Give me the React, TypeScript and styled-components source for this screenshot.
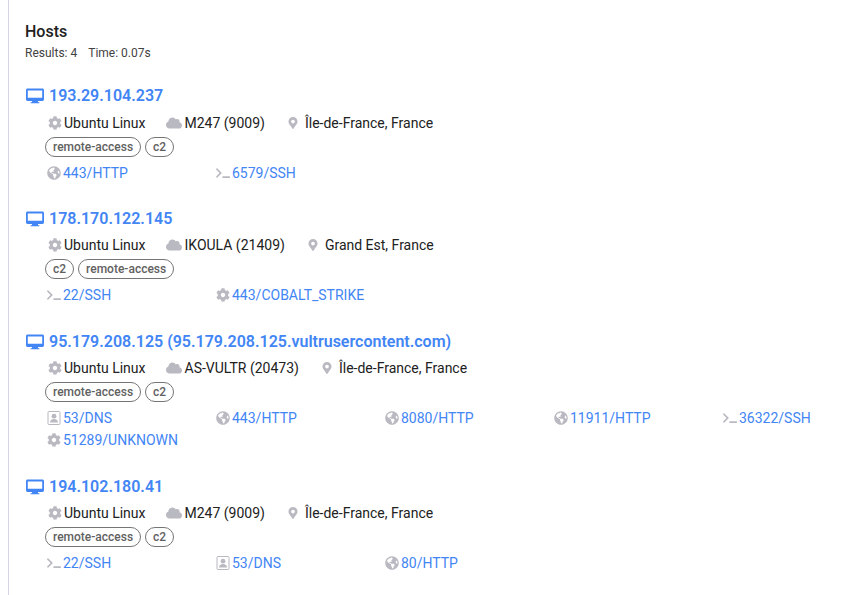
import { ReactNode } from "react";
import styled, { createGlobalStyle } from "styled-components";
import {
  FaCloud,
  FaCog,
  FaGlobeAmericas,
  FaMapMarkerAlt,
  FaTerminal,
} from "react-icons/fa";

const GlobalStyle = createGlobalStyle`
  html, body {
    margin: 0;
    padding: 0;
    background: #fff;
    overflow: hidden;
  }
  body {
    font-family: Roboto, "Liberation Sans", sans-serif;
  }
`;

const Page = styled.div`
  margin-left: 8px;
  width: 841px;
  height: 595px;
  box-sizing: border-box;
  border-left: 1px solid #d4d4e6;
  padding: 22px 0 0 16px;
`;

const Title = styled.h1`
  margin: 0;
  font-size: 16px;
  line-height: 19px;
  font-weight: 500;
  color: #212121;
`;

const Stats = styled.div`
  margin-top: 5px;
  display: flex;
  gap: 11px;
  font-size: 12px;
  line-height: 14px;
  color: #424242;
`;

const HostList = styled.div`
  margin-top: 25.2px;
  display: flex;
  flex-direction: column;
`;

const Host = styled.section`
  height: 122.8px;
  &:nth-child(3) {
    height: 145px;
  }
`;

const HostName = styled.a`
  display: flex;
  align-items: center;
  gap: 5px;
  margin-left: 1px;
  font-size: 16px;
  line-height: 22px;
  font-weight: 600;
  color: #4285f4;
`;

const Meta = styled.div`
  display: flex;
  align-items: center;
  margin: 6.4px 0 0 23px;
  height: 18px;
  font-size: 14px;
  color: #212121;
`;

const MetaItem = styled.span<{ $gap: number }>`
  display: flex;
  align-items: center;
  gap: 2px;
  margin-right: ${(p) => p.$gap}px;
  svg {
    color: #b9b9c1;
    font-size: 14px;
    flex: none;
  }
`;

const OrgItem = styled(MetaItem)`
  gap: 3px;
  svg {
    font-size: 16px;
  }
`;

const Place = styled(MetaItem)`
  gap: 6px;
  svg {
    font-size: 12px;
  }
`;

const Tags = styled.div`
  display: flex;
  gap: 4px;
  margin: 5px 0 0 20px;
`;

const Tag = styled.span`
  box-sizing: border-box;
  height: 20px;
  padding: 0 7px;
  border: 1px solid #757575;
  border-radius: 10px;
  font-size: 12px;
  line-height: 18px;
  font-weight: 500;
  color: #616161;
`;

const Ports = styled.div`
  display: grid;
  grid-template-columns: repeat(4, 169px) 126px;
  margin: 5px 0 0 22px;
`;

const Port = styled.a`
  display: flex;
  align-items: center;
  gap: 2px;
  height: 22px;
  font-size: 14px;
  color: #4285f4;
  svg {
    color: #b9b9c1;
    font-size: 14px;
    flex: none;
  }
`;

const DesktopIcon = () => (
  <svg width="18" height="16" viewBox="0 0 18 16" fill="currentColor">
    <path
      fillRule="evenodd"
      d="M1.6 .5h14.800c.9 0 1.600.7 1.600 1.600v9.200c0 .9-.7 1.600-1.600 1.600h-4.600l.4 1.400h1.200v1H4.600v-1h1.200l.4-1.400H1.600C.7 12.900 0 12.200 0 11.300V2.100C0 1.200.7 .5 1.600 .5zM1.800 2.500v7.200h14.400V2.500z"
    />
  </svg>
);

const DnsIcon = () => (
  <svg width="14" height="14" viewBox="0 0 14 14">
    <rect x="1" y="0.5" width="12" height="13" rx="1" fill="none" stroke="currentColor" />
    <circle cx="7" cy="5.200" r="2.400" fill="currentColor" />
    <path d="M3 11.500c0-2.400 1.600-3.600 4-3.600s4 1.200 4 3.600z" fill="currentColor" />
  </svg>
);

type PortData = { icon: ReactNode; label: string };

type HostData = {
  name: string;
  org: string;
  place: string;
  tags: string[];
  ports: PortData[];
};

const globe = <FaGlobeAmericas />;
const term = <FaTerminal />;
const cog = <FaCog />;
const dns = <DnsIcon />;

const hosts: HostData[] = [
  {
    name: "193.29.104.237",
    org: "M247 (9009)",
    place: "Île-de-France, France",
    tags: ["remote-access", "c2"],
    ports: [
      { icon: globe, label: "443/HTTP" },
      { icon: term, label: "6579/SSH" },
    ],
  },
  {
    name: "178.170.122.145",
    org: "IKOULA (21409)",
    place: "Grand Est, France",
    tags: ["c2", "remote-access"],
    ports: [
      { icon: term, label: "22/SSH" },
      { icon: cog, label: "443/COBALT_STRIKE" },
    ],
  },
  {
    name: "95.179.208.125 (95.179.208.125.vultrusercontent.com)",
    org: "AS-VULTR (20473)",
    place: "Île-de-France, France",
    tags: ["remote-access", "c2"],
    ports: [
      { icon: dns, label: "53/DNS" },
      { icon: globe, label: "443/HTTP" },
      { icon: globe, label: "8080/HTTP" },
      { icon: globe, label: "11911/HTTP" },
      { icon: term, label: "36322/SSH" },
      { icon: cog, label: "51289/UNKNOWN" },
    ],
  },
  {
    name: "194.102.180.41",
    org: "M247 (9009)",
    place: "Île-de-France, France",
    tags: ["remote-access", "c2"],
    ports: [
      { icon: term, label: "22/SSH" },
      { icon: dns, label: "53/DNS" },
      { icon: globe, label: "80/HTTP" },
    ],
  },
];

export default function App() {
  return (
    <Page>
      <GlobalStyle />
      <Title>Hosts</Title>
      <Stats>
        <span>Results: 4</span>
        <span>Time: 0.07s</span>
      </Stats>
      <HostList>
        {hosts.map((h) => (
          <Host key={h.name}>
            <HostName>
              <DesktopIcon />
              {h.name}
            </HostName>
            <Meta>
              <MetaItem $gap={20}>
                <FaCog />
                Ubuntu Linux
              </MetaItem>
              <OrgItem $gap={22}>
                <FaCloud />
                {h.org}
              </OrgItem>
              <Place $gap={0}>
                <FaMapMarkerAlt />
                {h.place}
              </Place>
            </Meta>
            <Tags>
              {h.tags.map((t) => (
                <Tag key={t}>{t}</Tag>
              ))}
            </Tags>
            <Ports>
              {h.ports.map((p) => (
                <Port key={p.label}>
                  {p.icon}
                  {p.label}
                </Port>
              ))}
            </Ports>
          </Host>
        ))}
      </HostList>
    </Page>
  );
}
